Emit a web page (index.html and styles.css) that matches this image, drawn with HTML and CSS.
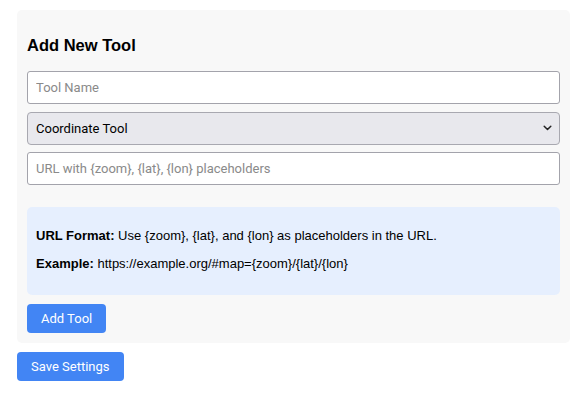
FILE: index.html
```html
<!DOCTYPE html>
<html>
<head>
<meta charset="utf-8">
<link rel="stylesheet" href="styles.css">
</head>
<body>
<div class="page">
  <section class="panel">
    <h3 class="title">Add New Tool</h3>
    <input class="field" type="text" placeholder="Tool Name">
    <div class="select">
      <span>Coordinate Tool</span>
      <svg class="chev" width="9" height="6" viewBox="0 0 9 6"><path d="M1.2 1.2 L4.5 4.5 L7.8 1.2" fill="none" stroke="#222" stroke-width="1.5" stroke-linecap="round" stroke-linejoin="round"/></svg>
    </div>
    <input class="field" type="text" placeholder="URL with {zoom}, {lat}, {lon} placeholders">
    <div class="info">
      <p><strong>URL Format:</strong> Use {zoom}, {lat}, and {lon} as placeholders in the URL.</p>
      <p><strong>Example:</strong> https://example.org/#map={zoom}/{lat}/{lon}</p>
    </div>
    <button class="btn">Add Tool</button>
  </section>
  <button class="btn save">Save Settings</button>
</div>
</body>
</html>
```
FILE: styles.css
```css
* { box-sizing: border-box; }
body {
  margin: 0;
  font-family: "Liberation Sans", Arial, sans-serif;
  background: #fff;
  color: #000;
}
.page {
  padding: 10px 15px 10px 17px;
}
.panel {
  background: #f8f8f8;
  border-radius: 5px;
  padding: 10px;
  display: flex;
  flex-direction: column;
  align-items: flex-start;
}
.title {
  font-size: 16.5px;
  font-weight: bold;
  margin: 16px 0 16px;
}
.field, .select {
  width: 100%;
  height: 33px;
  border: 1px solid #a3a3ab;
  border-radius: 3px;
  padding: 0 8px;
  font-family: Roboto, "Noto Sans", sans-serif;
  font-size: 13px;
  margin: 0 0 7.5px;
  background: #fff;
  color: #000;
}
.field::placeholder { color: #8a8a8a; }
.select {
  background: #e8e8ed;
  border-color: #a8a8b0;
  border-radius: 4px;
  display: flex;
  align-items: center;
  justify-content: space-between;
  padding: 0 7px 0 8px;
}
.chev { display: block; }
.info {
  width: 100%;
  margin-top: 14px;
  background: #e6effe;
  border-radius: 5px;
  padding: 9px 9px 11px;
  font-size: 13px;
  line-height: 16px;
}
.info p { margin: 12px 0; }
.btn {
  margin-top: 9px;
  background: #4285f4;
  color: #fff;
  border: none;
  border-radius: 4px;
  height: 29px;
  padding: 0 14px;
  font-family: Roboto, "Noto Sans", sans-serif;
  font-size: 13px;
}
.save {
  margin-top: 9px;
}
```
